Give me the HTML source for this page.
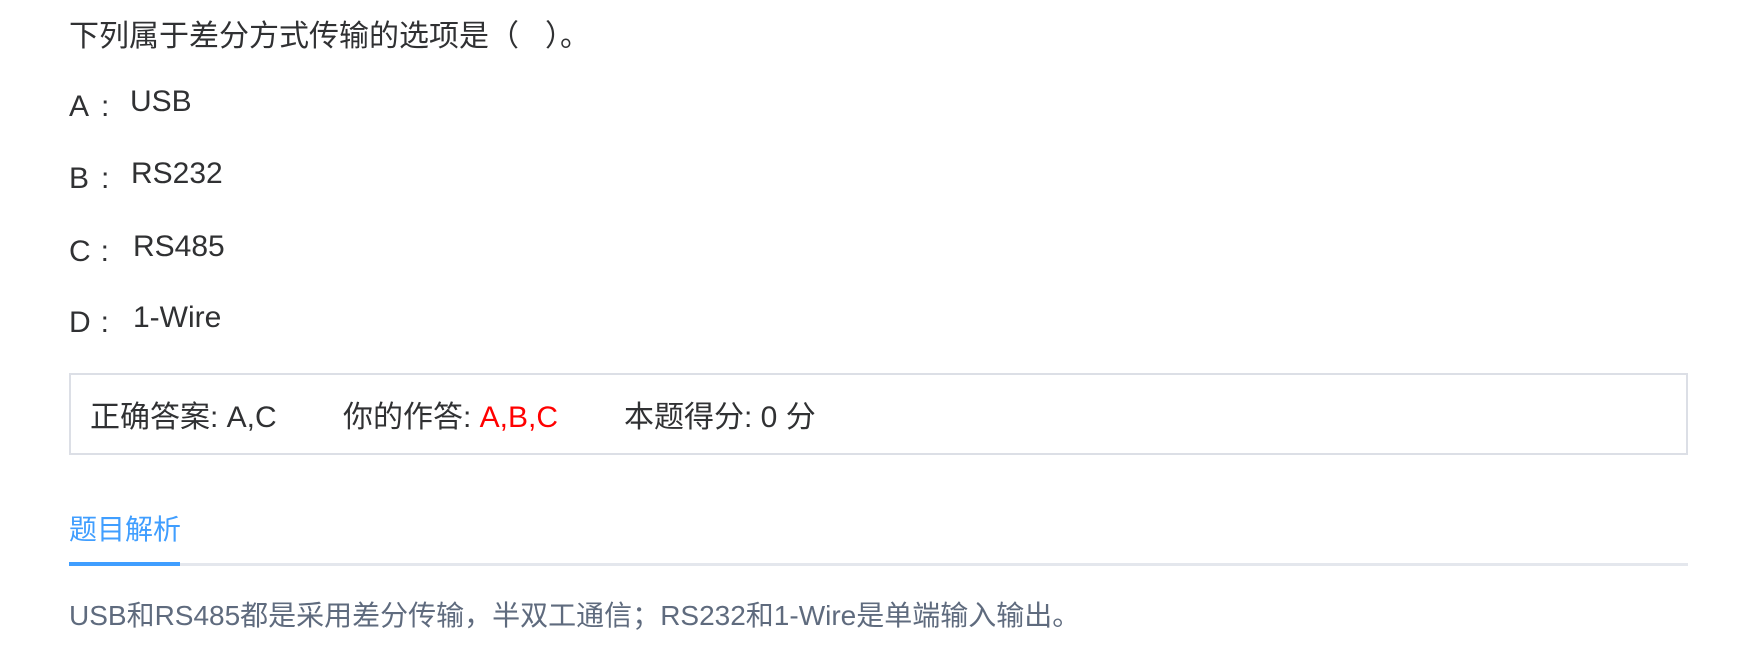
<!DOCTYPE html>
<html><head><meta charset="utf-8"><style>
html,body{margin:0;padding:0;width:1742px;height:670px;background:#fff;overflow:hidden}
body{font-family:"Liberation Sans","Noto Sans CJK SC",sans-serif;color:#303133;position:relative}
.a{position:absolute;white-space:nowrap;line-height:1.117}
</style></head><body>
<div class="a" style="left:69px;top:20px;font-size:30px">下列属于差分方式传输的选项是（<span style="display:inline-block;width:26px"></span>）。</div>

<div class="a" style="left:69px;top:90px;font-size:30px">A<span style="display:inline-block;width:12px"></span>:</div>
<div class="a" style="left:130px;top:85px;font-size:30px">USB</div>
<div class="a" style="left:69px;top:162px;font-size:30px">B<span style="display:inline-block;width:12px"></span>:</div>
<div class="a" style="left:131px;top:157px;font-size:30px">RS232</div>
<div class="a" style="left:69px;top:235px;font-size:30px">C<span style="display:inline-block;width:10px"></span>:</div>
<div class="a" style="left:133px;top:230px;font-size:30px">RS485</div>
<div class="a" style="left:69px;top:306px;font-size:30px">D<span style="display:inline-block;width:10px"></span>:</div>
<div class="a" style="left:133px;top:301px;font-size:30px">1-Wire</div>

<div style="position:absolute;left:69px;top:373px;border:2px solid #dcdfe6;box-sizing:border-box;width:1619px;height:82px"></div>
<div class="a" style="left:90px;top:401px;font-size:30px">正确答案: A,C</div>
<div class="a" style="left:343px;top:401px;font-size:30px">你的作答: <span style="color:#f00">A,B,C</span></div>
<div class="a" style="left:624px;top:401px;font-size:30px">本题得分: 0 分</div>

<div class="a" style="left:69px;top:514px;font-size:28px;color:#409eff">题目解析</div>
<div style="position:absolute;left:69px;top:563px;width:1619px;height:3px;background:#e4e7ed"></div>
<div style="position:absolute;left:69px;top:562px;width:111px;height:4px;background:#409eff"></div>

<div class="a" style="left:69px;top:600px;font-size:28px;color:#5f6b7e">USB和RS485都是采用差分传输，半双工通信；RS232和1-Wire是单端输入输出。</div>
</body></html>
